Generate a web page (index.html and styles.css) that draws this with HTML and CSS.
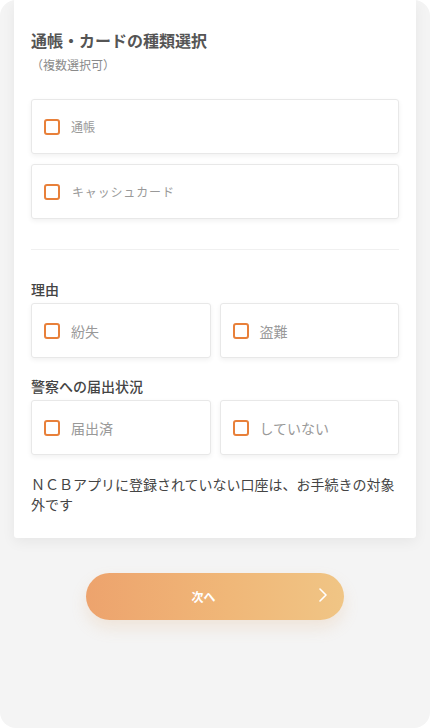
FILE: index.html
```html
<!DOCTYPE html>
<html lang="ja">
<head>
<meta charset="utf-8">
<link rel="stylesheet" href="styles.css">
</head>
<body>
<div class="frame">
  <section class="card">
    <h1 class="title">通帳・カードの種類選択</h1>
    <p class="sub">（複数選択可）</p>
    <div class="stack">
      <label class="opt"><span class="box"></span><span class="txt small">通帳</span></label>
      <label class="opt"><span class="box"></span><span class="txt small spaced">キャッシュカード</span></label>
    </div>
    <hr class="divider">
    <h2 class="label first">理由</h2>
    <div class="grid">
      <label class="opt"><span class="box"></span><span class="txt">紛失</span></label>
      <label class="opt"><span class="box"></span><span class="txt">盗難</span></label>
    </div>
    <h2 class="label">警察への届出状況</h2>
    <div class="grid">
      <label class="opt"><span class="box"></span><span class="txt">届出済</span></label>
      <label class="opt"><span class="box"></span><span class="txt">していない</span></label>
    </div>
    <p class="note">ＮＣＢアプリに登録されていない口座は、お手続きの対象外です</p>
  </section>
  <div class="actions">
    <button class="next">次へ
      <svg class="chev" width="8" height="14" viewBox="0 0 8 14"><path d="M1 1l6 6-6 6" fill="none" stroke="#fff" stroke-width="1.6" stroke-linecap="round" stroke-linejoin="round"/></svg>
    </button>
  </div>
</div>
</body>
</html>
```
FILE: styles.css
```css
html, body {
  margin: 0;
  padding: 0;
  background: #ffffff;
}
body {
  font-family: "Noto Sans CJK JP", "Noto Sans", sans-serif;
  color: #444;
}
.frame {
  width: 430px;
  height: 728px;
  background: #f4f4f4;
  border-radius: 16px;
  overflow: hidden;
  box-sizing: border-box;
}
.card {
  margin: 0 14px;
  background: #fff;
  padding: 28px 17px 24px;
  border-radius: 0 0 3px 3px;
  box-shadow: 0 4px 14px rgba(0,0,0,0.06);
}
.title {
  margin: 0;
  font-size: 16px;
  line-height: 24px;
  font-weight: 700;
  color: #555;
}
.sub {
  margin: 4px 0 0;
  font-size: 12px;
  line-height: 18px;
  color: #8a8a8a;
}
.stack {
  margin-top: 25px;
  display: flex;
  flex-direction: column;
  gap: 10px;
}
.opt {
  display: flex;
  align-items: center;
  height: 55px;
  box-sizing: border-box;
  padding-left: 12px;
  background: #fff;
  border: 1px solid #e8e8e8;
  border-radius: 3px;
  box-shadow: 0 2px 5px rgba(0,0,0,0.06);
}
.box {
  width: 16px;
  height: 16px;
  box-sizing: border-box;
  border: 2px solid #e8803a;
  border-radius: 3px;
  flex: none;
}
.txt {
  margin-left: 11px;
  font-size: 14px;
  color: #999;
}
.txt.small {
  font-size: 12px;
}
.txt.spaced {
  letter-spacing: 0.07em;
  margin-left: 12px;
}
.divider {
  margin: 30px 0 0;
  border: 0;
  height: 1px;
  background: #f0f0f0;
}
.label {
  margin: 18px 0 4px;
  font-size: 14px;
  line-height: 20px;
  font-weight: 500;
  color: #444;
}
.label.first {
  margin-top: 29px;
}
.grid {
  display: grid;
  grid-template-columns: 1fr 1fr;
  gap: 9px;
}
.note {
  margin: 19px 0 0;
  font-size: 14px;
  line-height: 20px;
  letter-spacing: 0;
  color: #444;
}
.actions {
  display: flex;
  justify-content: center;
  padding-top: 35px;
}
.next {
  position: relative;
  width: 258px;
  height: 47px;
  margin-left: -1px;
  padding: 0 22px 0 0;
  border: 0;
  border-radius: 24px;
  background: linear-gradient(90deg, #eda36d 0%, #f0b778 55%, #f0c585 100%);
  color: #fff;
  font-family: "Noto Sans CJK JP", sans-serif;
  font-size: 12px;
  font-weight: 700;
  box-shadow: 0 8px 16px rgba(220,160,100,0.18);
  cursor: pointer;
}
.chev {
  position: absolute;
  right: 17px;
  top: 15px;
}
```
